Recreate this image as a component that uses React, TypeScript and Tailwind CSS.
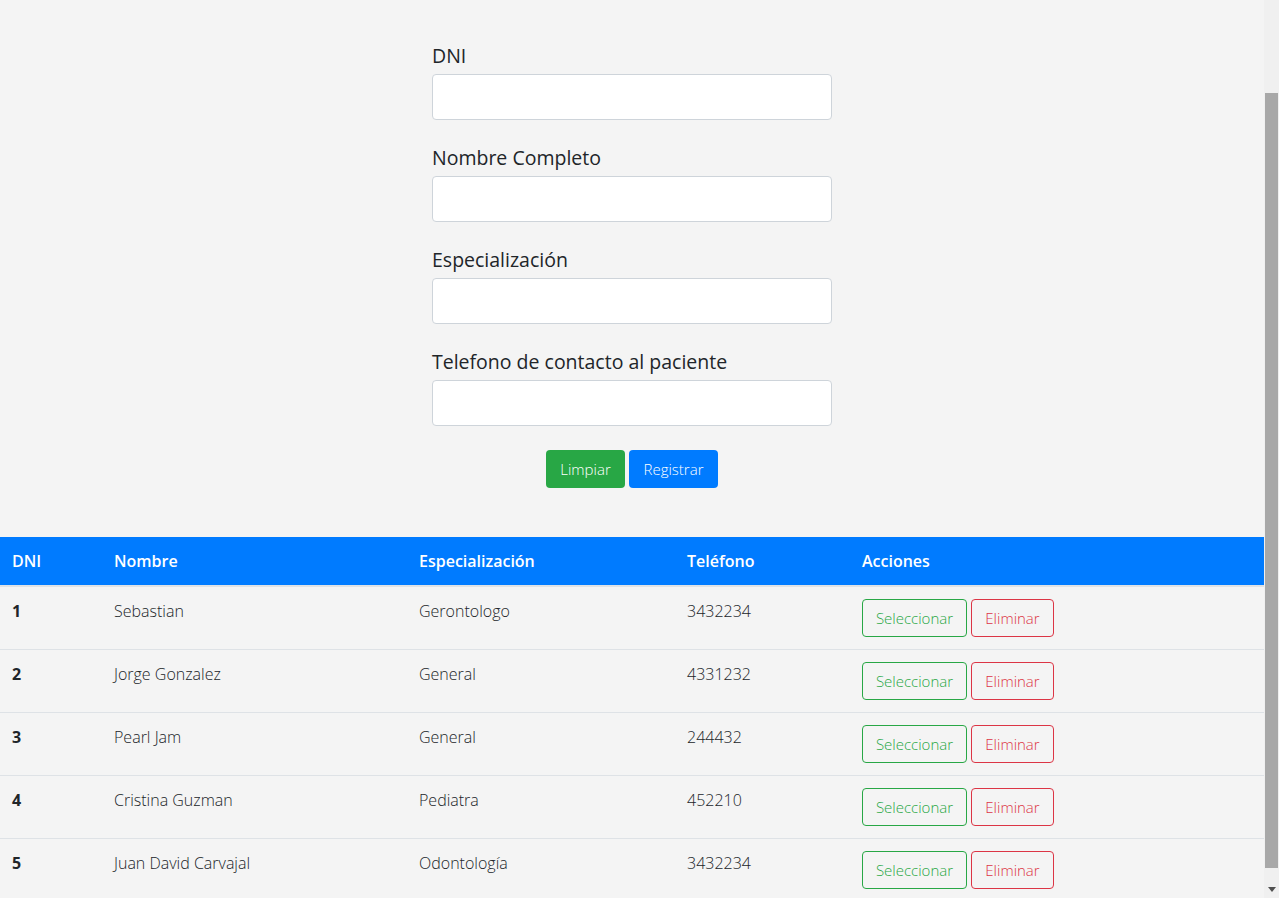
const FIELDS = ["DNI", "Nombre Completo", "Especialización", "Telefono de contacto al paciente"]

const DOCTORS = [
  { dni: "1", nombre: "Sebastian", esp: "Gerontologo", tel: "3432234" },
  { dni: "2", nombre: "Jorge Gonzalez", esp: "General", tel: "4331232" },
  { dni: "3", nombre: "Pearl Jam", esp: "General", tel: "244432" },
  { dni: "4", nombre: "Cristina Guzman", esp: "Pediatra", tel: "452210" },
  { dni: "5", nombre: "Juan David Carvajal", esp: "Odontología", tel: "3432234" },
]

const COLS = "grid grid-cols-[102px_305px_268px_175px_1fr]"

export default function App() {
  return (
    <div className="flex h-[898px] w-[1279px] overflow-hidden bg-[#f4f4f4] font-['Open_Sans',sans-serif] text-[#212529]">
      <main className="flex-1 flex flex-col">
        <form className="mx-auto w-[400px] pt-[42px] flex flex-col">
          {FIELDS.map((f) => (
            <div key={f} className="mb-[24px] flex flex-col">
              <label className="text-[19.5px] leading-[28px] mb-[4px]">{f}</label>
              <input className="h-[46px] w-full rounded-[4px] border border-[#ced4da] bg-white" />
            </div>
          ))}
          <div className="flex justify-center gap-[4px]">
            <button type="button" className="h-[38px] w-[79px] rounded-[4px] bg-[#28a745] text-white text-[15px] font-light">
              Limpiar
            </button>
            <button type="button" className="h-[38px] w-[89px] rounded-[4px] bg-[#007bff] text-white text-[15px] font-light">
              Registrar
            </button>
          </div>
        </form>

        <div className="mt-[49px] w-full">
          <div className={`${COLS} h-[50px] items-center bg-[#007bff] text-white text-[16px] font-semibold border-b-2 border-[#dee2e6]`}>
            <div className="px-[12px]">DNI</div>
            <div className="px-[12px]">Nombre</div>
            <div className="px-[12px]">Especialización</div>
            <div className="px-[12px]">Teléfono</div>
            <div className="px-[12px]">Acciones</div>
          </div>
          {DOCTORS.map((d) => (
            <div key={d.dni} className={`${COLS} border-b border-[#dee2e6] text-[16px] font-light`}>
              <div className="p-[12px] font-bold leading-[24px]">{d.dni}</div>
              <div className="p-[12px] leading-[24px]">{d.nombre}</div>
              <div className="p-[12px] leading-[24px]">{d.esp}</div>
              <div className="p-[12px] leading-[24px]">{d.tel}</div>
              <div className="p-[12px] flex gap-[4px]">
                <button type="button" className="h-[38px] w-[105px] rounded-[4px] border border-[#28a745] text-[#28a745] text-[15px] font-light">
                  Seleccionar
                </button>
                <button type="button" className="h-[38px] w-[83px] rounded-[4px] border border-[#dc3545] text-[#dc3545] text-[15px] font-light">
                  Eliminar
                </button>
              </div>
            </div>
          ))}
        </div>
      </main>

      <aside className="w-[15px] flex flex-col bg-[#f0f0f0] pt-[93px] pb-[4px]">
        <div className="mx-[1px] h-[775px] bg-[#a8a8a8]" />
        <div className="flex-1 flex items-end justify-center pb-[2px]">
          <svg width="8" height="5" viewBox="0 0 8 5">
            <path d="M0 0 H8 L4 5 Z" fill="#505050" />
          </svg>
        </div>
      </aside>
    </div>
  )
}
